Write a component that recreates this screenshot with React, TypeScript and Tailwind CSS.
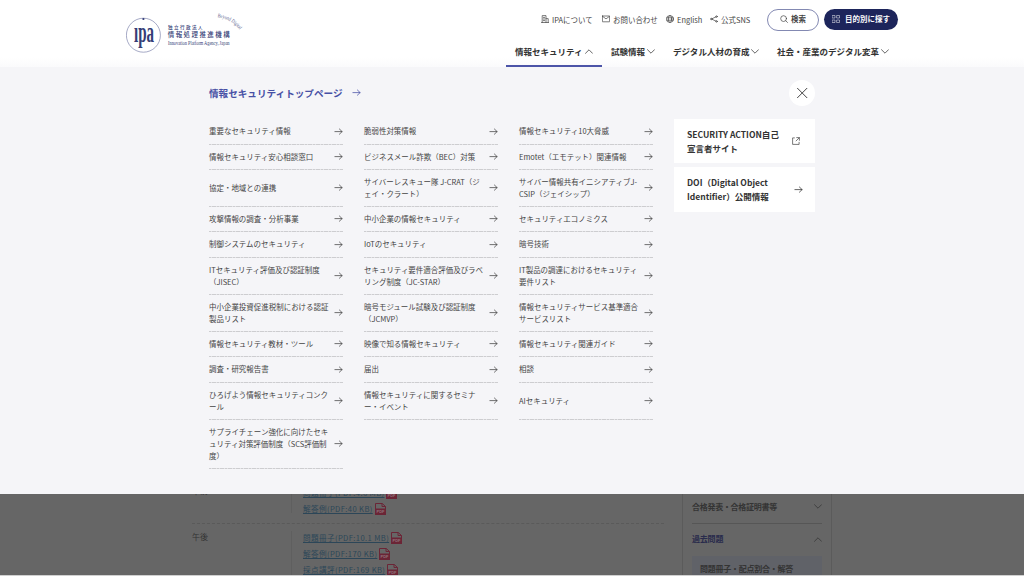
import { type ReactNode } from "react";

const stroke = { fill: "none", stroke: "currentColor", strokeLinecap: "round", strokeLinejoin: "round" } as const;

function Arrow({ className = "" }: { className?: string }) {
  return (
    <svg className={`h-[7px] w-[9px] shrink-0 ${className}`} viewBox="0 0 9 7" {...stroke} strokeWidth={0.75}>
      <path d="M.9 3.6h7.2M5.4 1l2.7 2.6-2.7 2.6" />
    </svg>
  );
}

function Chevron({ up = false, className = "" }: { up?: boolean; className?: string }) {
  return (
    <svg className={`h-[5px] w-2 shrink-0 ${className}`} viewBox="0 0 8 5" {...stroke} strokeWidth={0.75}>
      <path d={up ? "M.5 4.3 4 .8l3.5 3.5" : "M.5.7 4 4.2 7.5.7"} />
    </svg>
  );
}

function Logo() {
  return (
    <svg className="h-[44px] w-[120px]" viewBox="0 0 120 44" fill="#343d76">
      <circle cx="17.4" cy="23.2" r="17" fill="none" stroke="#6a719f" strokeWidth=".6" />
      <circle cx="17.4" cy="7" r="1.1" />
      <text x="8" y="29.8" fontFamily="Liberation Serif, serif" fontSize="30" fontWeight="700" textLength="20" lengthAdjust="spacingAndGlyphs">ıpa</text>
      <g fontFamily="Noto Sans CJK JP, sans-serif">
        <text x="42" y="16.6" fontSize="4.6" fontWeight="500" textLength="34.5">独立行政法人</text>
        <text x="41.7" y="25.4" fontSize="6.5" fontWeight="500" textLength="62">情報処理推進機構</text>
      </g>
      <text x="42" y="32.8" fontFamily="Liberation Serif, serif" fontSize="5.4" textLength="61.5" lengthAdjust="spacingAndGlyphs">Innovation Platform Agency, Japan</text>
      <path id="motto" d="M91.5 5.2Q106 7 114.5 19" fill="none" />
      <text fontFamily="Liberation Serif, serif" fontSize="5.6" fill="#59618d">
        <textPath href="#motto" textLength="26" lengthAdjust="spacingAndGlyphs">Beyond Digital</textPath>
      </text>
    </svg>
  );
}

function UtilityLink({ icon, children, className }: { icon: ReactNode; children: ReactNode; className: string }) {
  return (
    <a className={`flex items-center gap-[3px] whitespace-nowrap ${className}`}>
      <svg className="h-2 w-2 shrink-0" viewBox="0 0 8 8" {...stroke} strokeWidth={0.7}>{icon}</svg>
      <span>{children}</span>
    </a>
  );
}

function Header() {
  return (
    <header className="flex h-[67px] bg-linear-to-b from-white from-85% to-[#fafafc] text-[#444]">
      <div className="w-[506px] pt-3 pl-[126px]"><Logo /></div>
      <div className="flex-1">
        <div className="flex h-[39px] items-center pl-[35px] text-[7.47px]">
          <UtilityLink className="w-[61px]" icon={<path d="M1.2 7.5V.6h3.8v6.9M5 3.6h2.2v3.9M.5 7.5h7M2.4 2.4h1.3M2.4 4h1.3M2.4 5.6h1.3" />}>IPAについて</UtilityLink>
          <UtilityLink className="w-[64px]" icon={<><rect x=".4" y="1" width="7.2" height="5.8" rx=".2" /><path d="m.6 1.4 3.4 2.5 3.4-2.5" /></>}>お問い合わせ</UtilityLink>
          <UtilityLink className="w-[44px]" icon={<><circle cx="4" cy="4" r="3.5" /><ellipse cx="4" cy="4" rx="1.6" ry="3.5" /><path d="M.7 2.8h6.6M.7 5.2h6.6" /></>}>English</UtilityLink>
          <UtilityLink className="w-[57px]" icon={<><path d="M2.1 3.7 5.7 2M2.1 4.3 5.7 6" /><circle cx="1.3" cy="4" r=".8" /><circle cx="6.5" cy="1.6" r=".8" /><circle cx="6.5" cy="6.4" r=".8" /></>}>公式SNS</UtilityLink>
          <button className="flex h-[22px] w-[52px] items-center justify-center gap-[3px] rounded-full border border-[#8389b2] pb-px font-bold">
            <svg className="size-2" viewBox="0 0 8 8" {...stroke} strokeWidth={0.7}><circle cx="3.6" cy="3.6" r="2.9" /><path d="m5.8 5.8 1.7 1.7" /></svg>
            検索
          </button>
          <button className="ml-[5px] flex h-[21px] w-[74px] items-center justify-center gap-[5px] rounded-full bg-[#1d255b] pb-px font-bold text-white">
            <svg className="size-2" viewBox="0 0 8 8" {...stroke} strokeWidth={0.5}><rect x=".5" y=".5" width="2.5" height="2.5" /><rect x="5" y=".5" width="2.5" height="2.5" /><rect x=".5" y="5" width="2.5" height="2.5" /><rect x="5" y="5" width="2.5" height="2.5" /></svg>
            目的別に探す
          </button>
        </div>
        <nav className="flex h-7 text-[8.53px] font-bold whitespace-nowrap text-[#333]">
          <a className="flex w-24 items-center border-b-2 border-[#4c54a8] pb-px pl-[9px]"><span className="w-[70px]">情報セキュリティ</span><Chevron up /></a>
          <a className="flex w-[62px] items-center pb-[3px] pl-[9px]"><span className="w-[36px]">試験情報</span><Chevron /></a>
          <a className="flex w-[104px] items-center pb-[3px] pl-[9px]"><span className="w-[78px]">デジタル人材の育成</span><Chevron /></a>
          <a className="flex items-center pb-[3px] pl-[9px]"><span className="w-[104px]">社会・産業のデジタル変革</span><Chevron /></a>
        </nav>
      </div>
    </header>
  );
}

const topics: string[][] = [
  ["重要なセキュリティ情報", "脆弱性対策情報", "情報セキュリティ10大脅威"],
  ["情報セキュリティ安心相談窓口", "ビジネスメール詐欺（BEC）対策", "Emotet（エモテット）関連情報"],
  ["協定・地域との連携", "サイバーレスキュー隊 J-CRAT（ジ\nェイ・クラート）", "サイバー情報共有イニシアティブJ-\nCSIP（ジェイシップ）"],
  ["攻撃情報の調査・分析事業", "中小企業の情報セキュリティ", "セキュリティエコノミクス"],
  ["制御システムのセキュリティ", "IoTのセキュリティ", "暗号技術"],
  ["ITセキュリティ評価及び認証制度\n（JISEC）", "セキュリティ要件適合評価及びラベ\nリング制度（JC-STAR）", "IT製品の調達におけるセキュリティ\n要件リスト"],
  ["中小企業投資促進税制における認証\n製品リスト", "暗号モジュール試験及び認証制度\n（JCMVP）", "情報セキュリティサービス基準適合\nサービスリスト"],
  ["情報セキュリティ教材・ツール", "映像で知る情報セキュリティ", "情報セキュリティ関連ガイド"],
  ["調査・研究報告書", "届出", "相談"],
  ["ひろげよう情報セキュリティコンク\nール", "情報セキュリティに関するセミナ\nー・イベント", "AIセキュリティ"],
  ["サプライチェーン強化に向けたセキ\nュリティ対策評価制度（SCS評価制\n度）"],
];

function MegaMenu() {
  return (
    <section className="h-[427px] bg-[#f5f5f8] pl-[209px] text-[#444]">
      <div className="flex h-[52px] w-[606px] items-center justify-between">
        <a className="flex items-center gap-[9px] text-[9.6px] font-bold text-[#4750a5]">情報セキュリティトップページ<Arrow /></a>
        <button className="flex size-[26px] items-center justify-center rounded-full bg-white">
          <svg className="size-[11px]" viewBox="0 0 11 11" {...stroke} strokeWidth={1}><path d="m.5.3 9.4 9.4M9.9.3.5 9.7" /></svg>
        </button>
      </div>
      <div className="flex items-start gap-[21px]">
        <div className="grid w-[444px] grid-cols-3 grid-rows-[26px_25px_37px_25px_26px_37px_37px_25px_26px_37px_49px] gap-x-[21px]">
          {topics.flat().map((topic) => (
            <a key={topic} className="flex items-center justify-between bg-[repeating-linear-gradient(90deg,#cdcdd0_0_2px,#e4e4e7_2px_2.67px)] bg-[length:100%_1px] bg-bottom bg-no-repeat pb-[1.6px] text-[7.47px] leading-[12px] whitespace-pre">
              <span>{topic}</span><Arrow />
            </a>
          ))}
        </div>
        <aside className="flex w-[141px] flex-col gap-1 text-[8.53px] leading-[14px] font-bold whitespace-pre text-[#333]">
          <a className="flex h-[44px] items-center justify-between bg-white pr-[15px] pl-[13px]">
            <span className="pb-px">{"SECURITY ACTION自己\n宣言者サイト"}</span>
            <svg className="size-2" viewBox="0 0 8 8" {...stroke} strokeWidth={0.65}><path d="M2.4.9H.6v6.5h6.5V5.3M4.7.6h2.7v2.7M7.2.8 4.1 3.9" /></svg>
          </a>
          <a className="flex h-[45px] items-center justify-between bg-white pr-[12px] pl-[13px]">
            <span className="pb-[1.5px]">{"DOI（Digital Object\nIdentifier）公開情報"}</span><Arrow />
          </a>
        </aside>
      </div>
    </section>
  );
}

function PdfLink({ children }: { children: string }) {
  return (
    <a className="flex h-4 items-center gap-[2px]">
      <span className="text-[7.6px] tracking-[.39px] whitespace-nowrap text-[#2c4658] underline underline-offset-1">{children}</span>
      <svg className="h-3 w-[11px]" viewBox="0 0 11 12" fill="none" stroke="#6b2536">
        <path d="M.5 11.5V.5h6.8l3.2 3v8z" /><path d="M7 .5v3h3.5" /><path d="M0 5.5h11V12H0z" fill="#6b2536" stroke="none" />
        <text x="1.5" y="10.3" fill="#90737b" stroke="none" fontFamily="Liberation Sans, sans-serif" fontSize="4" fontWeight="700">PDF</text>
      </svg>
    </a>
  );
}

function DimmedPage() {
  return (
    <main className="flex h-[81px] overflow-hidden bg-[#666] pl-[192px] text-[8px] text-[#343434]">
      <div className="w-[472px]">
        <div className="flex h-[30px] items-end border-b border-dashed border-[#5a5a5a]">
          <div className="h-[30px] w-[100px]"><div className="h-[27px] border-r border-[#5f5f5f]"><div className="-mt-[7px] leading-[10px]">午前</div></div></div>
          <div className="h-[38px] pl-[11px]"><PdfLink>問題冊子(PDF:4.6 MB)</PdfLink><PdfLink>解答例(PDF:40 KB)</PdfLink></div>
        </div>
        <div className="flex pt-[6px]">
          <div className="mt-px h-[50px] w-[100px] border-r border-[#5f5f5f] pt-px leading-[10px]">午後</div>
          <div className="pl-[11px]"><PdfLink>問題冊子(PDF:10.1 MB)</PdfLink><PdfLink>解答例(PDF:170 KB)</PdfLink><PdfLink>採点講評(PDF:169 KB)</PdfLink></div>
        </div>
      </div>
      <aside className="ml-[18px] w-[150px] border-x border-[#5b5b5b] px-[9px] font-bold">
        <div className="flex h-[30px] items-center justify-between border-b border-[#565656] pb-1"><span className="tracking-[-.28px]">合格発表・合格証明書等</span><Chevron /></div>
        <div className="flex h-8 items-center justify-between pb-[2px]"><span className="tracking-[-.2px] text-[#292b4c]">過去問題</span><Chevron up /></div>
        <div className="h-5 bg-[#606268] pt-[7px] pl-2 leading-[12px] tracking-[-.25px] whitespace-nowrap">問題冊子・配点割合・解答</div>
      </aside>
    </main>
  );
}

export default function App() {
  return (
    <div lang="ja" className="h-[576px] w-[1024px] overflow-hidden bg-[#d0d0d0] font-['Noto_Sans_CJK_JP',sans-serif]">
      <Header /><MegaMenu /><DimmedPage />
    </div>
  );
}
